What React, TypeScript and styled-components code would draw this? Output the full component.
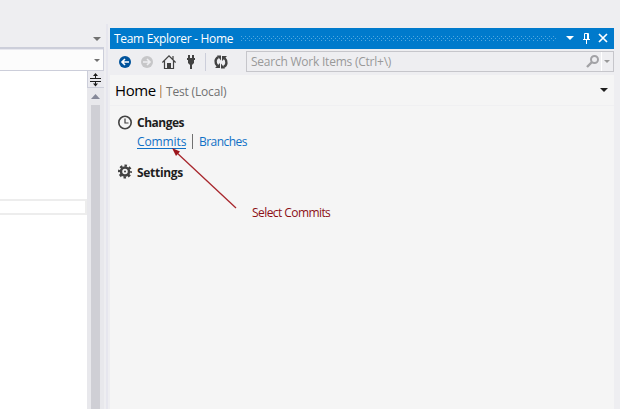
import React from "react";
import styled, { createGlobalStyle } from "styled-components";

const Global = createGlobalStyle`
  * { box-sizing: border-box; }
  body { margin: 0; overflow: hidden; background: #eeeef1; font-family: "Open Sans", "Noto Sans", sans-serif; font-size: 12px; color: #1e1e1e; }
  svg { display: block; flex: none; }
`;

const Window = styled.div`
  display: grid;
  grid-template-columns: 104px 6px 504px 6px;
  width: 620px;
  height: 409px;
`;
const Editor = styled.div`
  display: flex;
  flex-direction: column;
`;
const TabStrip = styled.div`
  height: 47px;
  padding: 37px 3px 0 0;
  display: flex;
  justify-content: flex-end;
`;
const NavigationBar = styled.div`
  height: 24px;
  border: 1px solid #ccceda;
  border-top-width: 2px;
  border-left: 0;
  background: #fcfcfc;
  box-shadow: inset 0 1px #e8e8ef;
  display: flex;
  justify-content: flex-end;
  padding: 10px 3px 0 0;
`;
const CodeArea = styled.div`
  flex: 1;
  display: grid;
  grid-template-columns: 87px 17px;
`;
const Code = styled.div`
  background: #fff;
  padding-top: 128px;
`;
const CurrentLine = styled.div`
  height: 16px;
  border: 2px solid #ededed;
  border-left: 0;
`;
const ScrollColumn = styled.div`
  background: #e8e8ec;
  display: flex;
  flex-direction: column;
  align-items: center;
`;
const Splitter = styled.div`
  width: 17px;
  height: 17px;
  border: 1px solid #ccceda;
  border-width: 0 0 1px 1px;
  background: #eaeaef;
  margin-bottom: 6px;
`;
const Thumb = styled.div`
  width: 9px;
  flex: 1;
  margin: 6px 0 0 0;
  background: #cfcfd5;
`;
const Gutter = styled.div`
  margin: 24px 2px 0;
  background: #e6e6ee;
`;
const Panel = styled.div`
  margin-top: 28px;
  background: #f5f5f5;
`;
const TitleBar = styled.div`
  height: 21px;
  background: #007acc;
  color: #fff;
  display: flex;
  padding-left: 4px;
`;
const Label = styled.span<{ $w: number; $size?: number; $spacing?: number; $color?: string; $bold?: boolean; $line?: number }>`
  flex: none;
  width: ${(p) => p.$w}px;
  white-space: pre;
  font-size: ${(p) => p.$size ?? 12}px;
  line-height: ${(p) => p.$line ?? 21}px;
  letter-spacing: ${(p) => p.$spacing ?? 0}px;
  color: ${(p) => p.$color ?? "inherit"};
  font-weight: ${(p) => (p.$bold ? 700 : 400)};
`;
const Grip = styled.div`
  width: 316px;
  height: 5px;
  margin: 8px 9px 0 8px;
  background-image: conic-gradient(from 270deg at 1px 1px, #55a8e0 90deg, transparent 0),
    conic-gradient(from 270deg at 1px 1px, #55a8e0 90deg, transparent 0);
  background-size: 4px 4px;
  background-position: 0 0, 2px 2px;
`;
const Toolbar = styled.div`
  height: 26px;
  background: #eeeef1;
  display: flex;
  padding: 2px 0 0 8px;
`;
const ToolIcons = styled.div`
  width: 128px;
  flex: none;
`;
const SearchBox = styled.div`
  width: 368px;
  height: 21px;
  border: 1px solid #c6c6cb;
  display: flex;
  padding-left: 4px;
`;
const SearchButtons = styled.div`
  margin-left: auto;
`;
const PageHeader = styled.div`
  height: 31px;
  border-bottom: 1px solid #f0f0f2;
  display: flex;
  align-items: flex-start;
  padding: 0 6px 0 5px;
`;
const HeadingRule = styled.div`
  width: 2px;
  height: 13px;
  margin: 10px 4px 0 0;
  border-left: 1px solid #d5a06a;
  background: #c9cfdc;
`;
const HeaderArrow = styled.div`
  margin: 13px 0 0 auto;
`;
const Content = styled.div`
  position: relative;
  padding: 7px 0 0 8px;
`;
const Section = styled.div`
  height: 20px;
  display: flex;
  align-items: flex-start;
  gap: 5px;
  line-height: 18px;

  svg { margin-top: 2px; }
`;
const Links = styled.div`
  height: 29px;
  padding-left: 19px;
  display: flex;
`;
const Link = styled.a<{ $w: number; $active?: boolean; $spacing: number }>`
  width: ${(p) => p.$w}px;
  height: 16px;
  line-height: 18px;
  color: #1070c6;
  letter-spacing: ${(p) => p.$spacing}px;
  border-bottom: ${(p) => (p.$active ? "1px solid #1070c6" : "0")};
  white-space: nowrap;
`;
const LinkRule = styled.div`
  width: 1px;
  height: 15px;
  margin: 1px 6px 0 6px;
  background: #717171;
`;
const Callout = styled.div`
  position: absolute;
  left: 61px;
  top: 41px;
  display: flex;
`;
const CalloutText = styled.div`
  margin: 55px 0 0 11px;
  line-height: 22px;
  letter-spacing: -0.57px;
  color: #8c1016;
  white-space: nowrap;
`;

const Caret = ({ w = 8, color = "#717171" }: { w?: number; color?: string }) => (
  <svg width={w} height={w / 2 + 1} viewBox={`0 0 ${w} ${w / 2 + 1}`}>
    <path d={`M0 0H${w}L${w / 2} ${w / 2}Z`} fill={color} />
  </svg>
);

const ToolbarGraphics = () => (
  <svg width="128" height="22" viewBox="118 51 128 22" fill="none">
    <circle cx="125" cy="62" r="6" fill="#00539c" />
    <path d="M129 62H122M125 59L122 62L125 65" stroke="#fff" strokeWidth="1.6" />
    <circle cx="147" cy="62" r="6" fill="#c6c6c8" />
    <path d="M143 62H150M147 59L150 62L147 65" stroke="#eeeef1" strokeWidth="1.6" />
    <path d="M162.4 62.5L169 55.8L175.6 62.5M164.5 61V68.5H173.5V61M173 56V60" stroke="#424242" strokeWidth="1.2" />
    <path d="M167 69V63H171V69Z" fill="#424242" />
    <path d="M188 55H190V58H192V55H194V58H195V60H194V63L192 65V69H190V65L188 63V60H187V58H188Z" fill="#424242" />
    <path d="M187 59H195" stroke="#424242" strokeWidth="1.5" />
    <path d="M205.5 53V71" stroke="#ccceda" />
    <path d="M218.5 57C215 58.5 214.5 63 217.5 66M223.5 67C227 65.5 227.5 61 224.5 58" stroke="#424242" strokeWidth="2.4" />
    <path d="M217 55.5H221V60.5ZM225 68.5H221V63.5Z" fill="#424242" />
    <path d="M215 68H220V63ZM227 56H222V61Z" fill="#424242" />
  </svg>
);

export default function App() {
  return (
    <>
      <Global />
      <Window>
        <Editor>
          <TabStrip><Caret /></TabStrip>
          <NavigationBar><Caret w={6} /></NavigationBar>
          <CodeArea>
            <Code><CurrentLine /></Code>
            <ScrollColumn>
              <Splitter>
                <svg width="16" height="16" viewBox="88 71 16 16" fill="none" stroke="#1e1e1e">
                  <path d="M90 78.5H101M90 81.5H101" strokeWidth="1.2" />
                  <path d="M95.5 74V78M95.5 82V86" />
                  <path d="M93 76L95.5 73L98 76ZM93 83.5L95.5 86.5L98 83.5Z" fill="#1e1e1e" stroke="none" />
                </svg>
              </Splitter>
              <svg width="9" height="5" viewBox="0 0 9 5"><path d="M0 5L4.5 0L9 5Z" fill="#868999" /></svg>
              <Thumb />
            </ScrollColumn>
          </CodeArea>
        </Editor>
        <Gutter />
        <Panel>
          <TitleBar>
            <Label $w={119} $spacing={-0.31}>Team Explorer - Home</Label>
            <Grip />
            <svg width="47" height="21" viewBox="566 28 47 21" fill="none">
              <path d="M566 36H574L570 40Z" fill="#fff" />
              <path d="M584.5 39V33.5H588.5V39M583 39.5H590M586.5 40V44M587.5 34V39" stroke="#fff" />
              <path d="M599 34L607 42M607 34L599 42" stroke="#fff" strokeWidth="1.7" />
            </svg>
          </TitleBar>
          <Toolbar>
            <ToolIcons><ToolbarGraphics /></ToolIcons>
            <SearchBox>
              <Label $w={150} $spacing={-0.23} $color="#999" $line={20}>Search Work Items (Ctrl+\)</Label>
              <SearchButtons>
                <svg width="29" height="19" viewBox="584 52 29 19" fill="none">
                  <circle cx="594.5" cy="59.5" r="3.5" stroke="#a2a2a6" strokeWidth="2" />
                  <path d="M592 62L587 67" stroke="#a2a2a6" strokeWidth="2.4" />
                  <path d="M601.5 51V72" stroke="#fff" />
                  <path d="M604 60H610L607 63Z" fill="#999" />
                </svg>
              </SearchButtons>
            </SearchBox>
          </Toolbar>
          <PageHeader>
            <Label $w={45} $size={15} $spacing={-0.4} $color="#000" $line={31}>Home</Label>
            <HeadingRule />
            <Label $w={70} $spacing={-0.17} $color="#717171" $line={34}>Test (Local)</Label>
            <HeaderArrow><Caret color="#1e1e1e" /></HeaderArrow>
          </PageHeader>
          <Content>
            <Section>
              <svg width="14" height="15" viewBox="0 0 14 15" fill="none" stroke="#424242">
                <circle cx="7" cy="7.5" r="6.2" strokeWidth="1.6" /><path d="M7 3.5V8H10.5" strokeWidth="1.2" />
              </svg>
              <Label $w={60} $bold $spacing={-0.5} $line={20}>Changes</Label>
            </Section>
            <Links>
              <Link $w={49} $active $spacing={-0.1}>Commits</Link>
              <LinkRule />
              <Link $w={50} $spacing={-0.55}>Branches</Link>
            </Links>
            <Section>
              <svg width="14" height="15" viewBox="0 0 14 15" fill="none" stroke="#424242">
                <circle cx="7" cy="7.5" r="4" strokeWidth="2.5" />
                <circle cx="7" cy="7.5" r="5.9" strokeWidth="2.2" strokeDasharray="2.5 2.134" strokeDashoffset="1.25" />
                <circle cx="7" cy="7.5" r="1" fill="#424242" stroke="none" />
              </svg>
              <Label $w={60} $bold $spacing={-0.3} $line={21}>Settings</Label>
            </Section>
            <Callout>
              <svg width="70" height="66" viewBox="171 147 70 66">
                <path d="M176 152L236 208" stroke="#a8262c" strokeWidth="1.3" />
                <path d="M172 148L180 151.5L176 156Z" fill="#9c161c" />
              </svg>
              <CalloutText>Select Commits</CalloutText>
            </Callout>
          </Content>
        </Panel>
      </Window>
    </>
  );
}
